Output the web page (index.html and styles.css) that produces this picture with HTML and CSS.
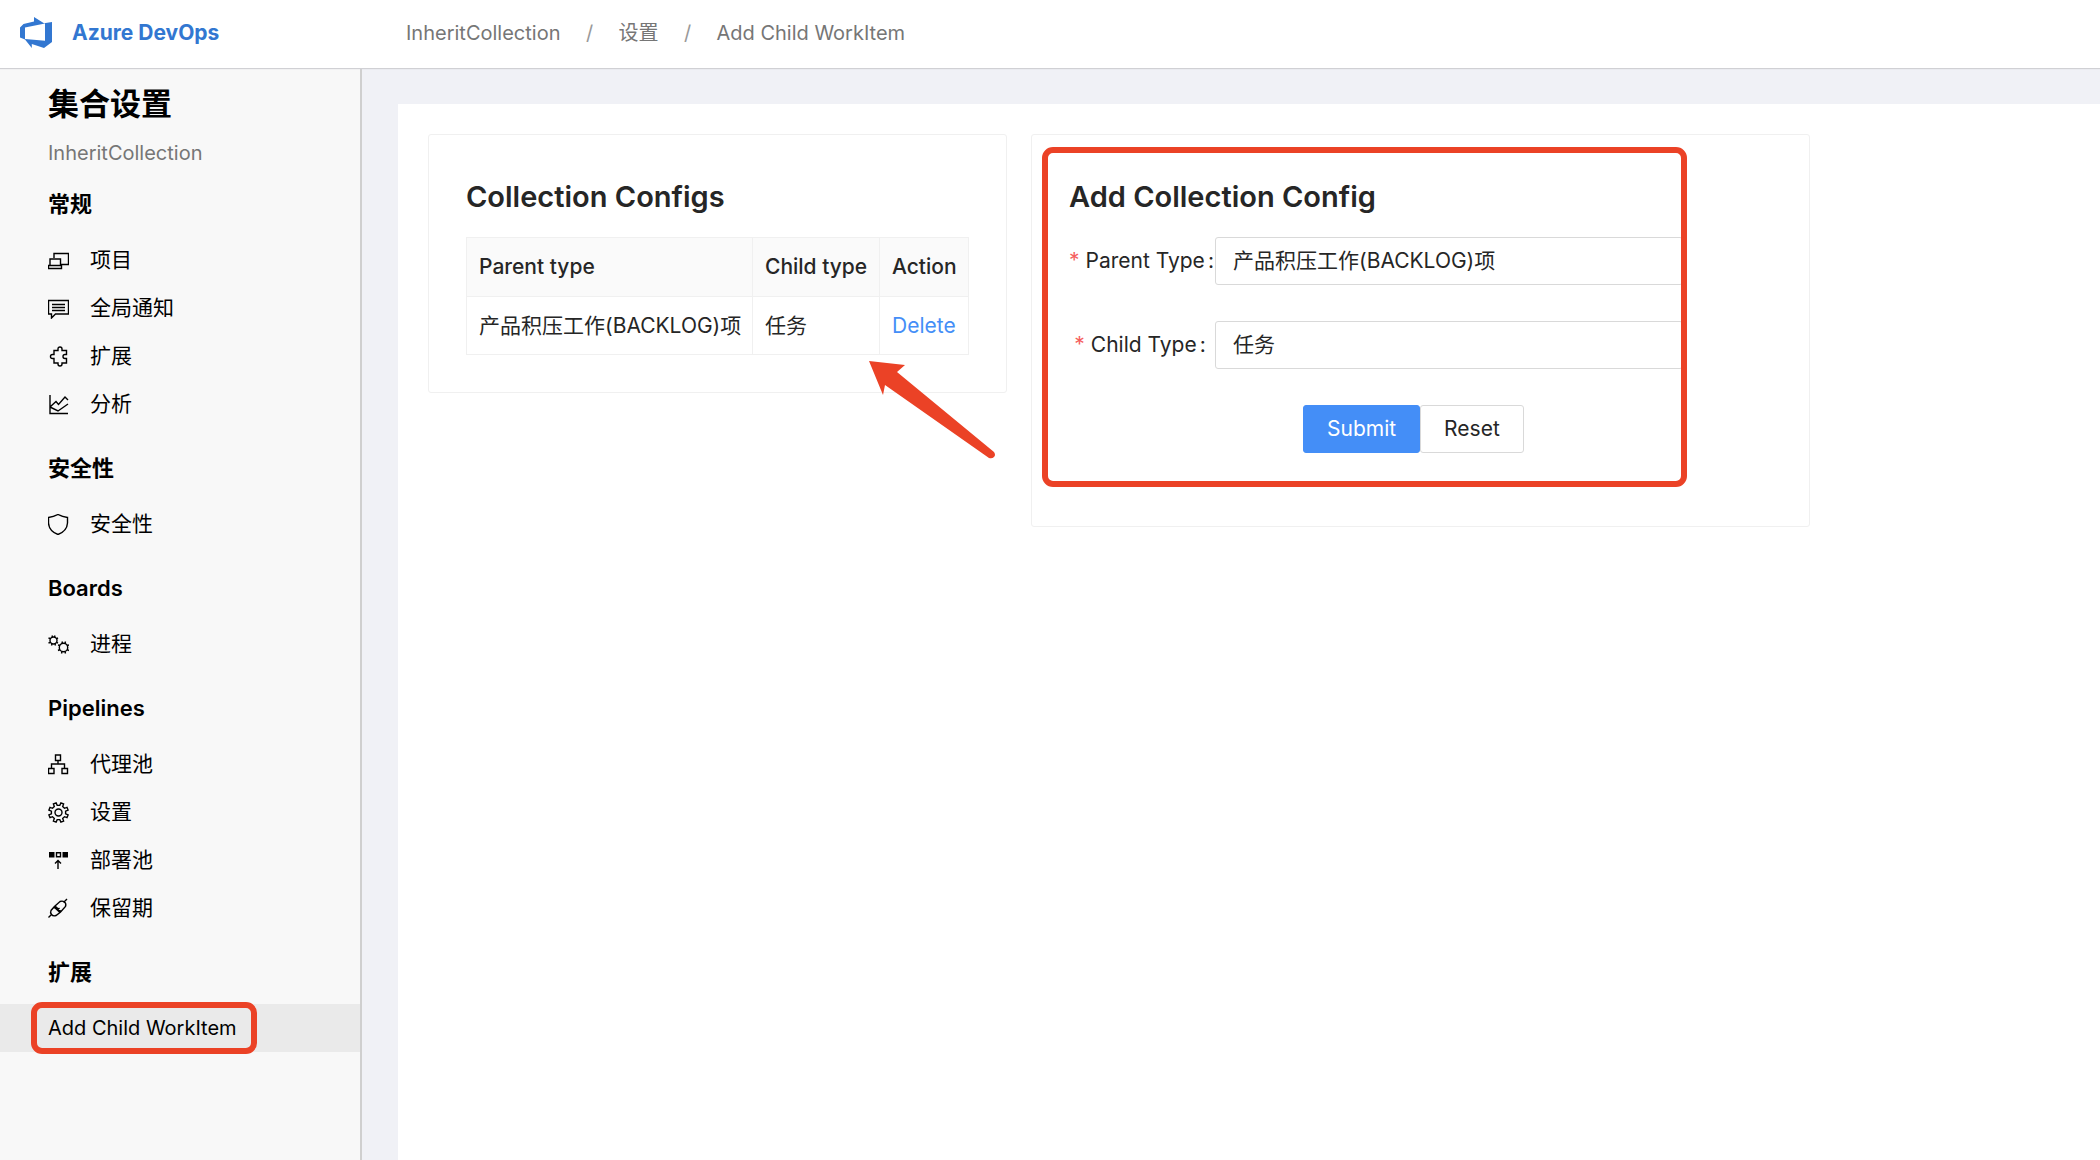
FILE: index.html
```html
<!DOCTYPE html>
<html lang="zh-CN">
<head>
<meta charset="utf-8">
<meta name="viewport" content="width=device-width, initial-scale=1">
<title>Add Child WorkItem - Azure DevOps</title>
<link rel="stylesheet" href="styles.css">
</head>
<body>
<header class="topbar">
  <a class="brand" href="#">
    <svg class="brand-logo" viewBox="0 0 32 32" aria-hidden="true"><path fill="currentColor" fill-rule="evenodd" d="M14 0 24 6.200 32 5V25L24 31 11.800 27V31L5 22.500 0 20.500V10.500L3.500 7 14 4.500ZM5 10.500V22L25 23.800V6.500Z"/></svg>
    <span>Azure DevOps</span>
  </a>
  <nav class="crumbs" aria-label="Breadcrumb">
    <a href="#">InheritCollection</a><span class="crumb-sep">/</span><a href="#">设置</a><span class="crumb-sep">/</span><a href="#">Add Child WorkItem</a>
  </nav>
</header>
<div class="layout">
  <aside class="sidebar">
    <h1 class="side-title">集合设置</h1>
    <p class="side-sub">InheritCollection</p>
    <nav class="menu">
      <h2 class="menu-head">常规</h2>
      <a class="menu-item cjk" href="#"><svg class="icon" viewBox="0 0 21 21"><path d="M6 8V3.500H20.500V14.500H13M2 15V9H12.500V15M.500 15.500H13.500V18.500H.500Z"/></svg>项目</a>
      <a class="menu-item cjk" href="#"><svg class="icon" viewBox="0 0 21 21"><path d="M.500 2.500H20.500V16H7.500L3.500 20V16H.500ZM4 6.500H17M4 9.500H17M4 12.500H17"/></svg>全局通知</a>
      <a class="menu-item cjk" href="#"><svg class="icon" viewBox="0 0 21 21"><path d="M6 4.500H10V3Q10 1 12 1T14 3V4.500H18.500V8.500H17Q15 8.500 15 10.500T17 12.500H18.500V17H14V18Q14 20 12 20T10 18V17H6V12.500H4.500Q2.500 12.500 2.500 10.500T4.500 8.500H6Z"/></svg>扩展</a>
      <a class="menu-item cjk" href="#"><svg class="icon" viewBox="0 0 21 21"><path d="M2 1V19.500H20M2 13 8 7.500 10.500 10.500 17 3 20 6M2 13 10 17 20 10"/></svg>分析</a>
      <h2 class="menu-head">安全性</h2>
      <a class="menu-item cjk" href="#"><svg class="icon" viewBox="0 0 21 21"><path d="M10 .500Q14.500 3 19.500 3.500V9Q19 17 10 20.500Q1 17 .500 9V3.500Q5.500 3 10 .500Z"/></svg>安全性</a>
      <h2 class="menu-head">Boards</h2>
      <a class="menu-item cjk" href="#"><svg class="icon" viewBox="0 0 21 21"><circle cx="5.500" cy="6.500" r="3.500"/><circle cx="15.500" cy="13.500" r="4.200"/><path d="M4 1.500 4.500 3M7 1.500 6.500 3M9 4.500 10 4M9 8.500 10 9M7 10 7.500 11.500M4 10 3.500 11.500M.500 9 2 8.500M.500 4 2 4.500M14 7.500 14.500 9.500M17.500 7.500 17 9.500M19 11.500 21 11M19 15.500 21 16.500M17 17.500 17.500 19.500M14 17.500 13.500 19.500M10 16.500 12 15.500M10 11 12 11.500"/></svg>进程</a>
      <h2 class="menu-head">Pipelines</h2>
      <a class="menu-item cjk" href="#"><svg class="icon" viewBox="0 0 21 21"><path d="M7.500 1H12.500V6.500H7.500ZM10 6.500V10M3.500 14V10H16.500V14M.500 14.500H6V19.500H.500ZM14 14.500H19.500V19.500H14Z"/></svg>代理池</a>
      <a class="menu-item cjk" href="#"><svg class="icon" viewBox="0 0 21 21"><circle cx="10.500" cy="10.500" r="3.500"/><path d="M8.100 .900 9.200 3.400H11.800L12.900 .900 15.600 2 14.700 4.500 16.500 6.300 19 5.400 20.100 8.100 17.600 9.200V11.800L20.100 12.900 19 15.600 16.500 14.700 14.700 16.500 15.600 19 12.900 20.100 11.800 17.600H9.200L8.100 20.100 5.400 19 6.300 16.500 4.500 14.700 2 15.600 .900 12.900 3.400 11.800V9.200L.900 8.100 2 5.400 4.500 6.300 6.300 4.500 5.400 2Z"/></svg>设置</a>
      <a class="menu-item cjk" href="#"><svg class="icon" viewBox="0 0 21 21"><path fill="currentColor" stroke="none" d="M1 2H6.500V7.500H1ZM14.500 2H20V7.500H14.500Z"/><path d="M8.500 2.700H12.500V6.800H8.500ZM10 19V11M7 13.500 10 10.500 13 13.500"/></svg>部署池</a>
      <a class="menu-item cjk" href="#"><svg class="icon" viewBox="0 0 21 21"><path d="M.500 19.500 4 16M19 1 15.500 4.500M7 8 12 3.500Q14.500 2.500 16.500 4T17.500 8.500L13 13.500ZM6 9 12 14.500 8 17.500Q5 18.500 3.500 16.500T3 12.500ZM9 12.500 11.500 10"/></svg>保留期</a>
      <h2 class="menu-head">扩展</h2>
      <a class="menu-item is-active" href="#" aria-current="page"><span class="marked">Add Child WorkItem</span></a>
    </nav>
  </aside>
  <main class="main">
    <div class="page">
      <section class="card card-table">
        <h2 class="card-title">Collection Configs</h2>
        <table class="configs">
          <thead><tr><th class="col-parent">Parent type</th><th class="col-child">Child type</th><th>Action</th></tr></thead>
          <tbody><tr><td>产品积压工作(BACKLOG)项</td><td>任务</td><td><a class="link" href="#">Delete</a></td></tr></tbody>
        </table>
        <svg class="arrow" viewBox="0 0 128 100" aria-hidden="true"><path fill="#eb4226" d="M1 1 37 5 29 12 126 92Q128 95 126 97T121 98L17 25 15 35Z"/></svg>
      </section>
      <section class="card card-form">
        <form class="form">
          <h2 class="card-title">Add Collection Config</h2>
          <div class="field">
            <label for="parent"><span class="star">*</span>Parent Type<span class="colon">:</span></label>
            <select id="parent"><option>产品积压工作(BACKLOG)项</option></select>
          </div>
          <div class="field">
            <label for="child"><span class="star">*</span>Child Type<span class="colon">:</span></label>
            <select id="child"><option>任务</option></select>
          </div>
          <div class="actions"><button class="btn btn-primary" type="submit">Submit</button><button class="btn" type="reset">Reset</button></div>
        </form>
      </section>
    </div>
  </main>
</div>
</body>
</html>
```
FILE: styles.css
```css
* { box-sizing: border-box; }
body {
  margin: 0;
  min-height: 100vh;
  display: flex;
  flex-direction: column;
  font: 20px/32px Inter, "Noto Sans CJK SC", sans-serif;
  color: #262626;
  background: #f0f1f6;
}
h1, h2, p { margin: 0; }
a { color: inherit; text-decoration: none; }
.cjk { font-size: 21px; }

.topbar {
  position: relative;
  display: flex;
  align-items: center;
  height: 68px;
  padding: 0 20px 2px;
  background: #fff;
  box-shadow: 0 1px 1px #d0d0d4;
}
.brand {
  display: flex;
  align-items: center;
  gap: 20px;
  width: 386px;
  color: #3277d1;
  font-size: 21px;
  font-weight: 700;
}
.brand-logo { width: 32px; height: 32px; }
.crumbs { display: flex; color: #767676; }
.crumb-sep { width: 58px; text-align: center; color: #999; }

.layout { flex: 1; display: flex; }
.sidebar {
  flex: none;
  width: 362px;
  padding-top: 16px;
  background: #f8f8f8;
  border-right: 2px solid #cfcfcf;
  color: #000;
}
.side-title, .side-sub { padding-left: 48px; }
.side-title { font-size: 31px; line-height: 40px; font-weight: 700; }
.side-sub { margin-top: 18px; line-height: 22px; color: #767676; }
.menu-head {
  height: 72px;
  padding: 8px 48px 0;
  font-size: 22px;
  line-height: 64px;
  font-weight: 600;
}
.menu-head:lang(zh) { font-weight: 600; }
.menu-item {
  display: flex;
  align-items: center;
  gap: 21px;
  height: 48px;
  padding-left: 48px;
}
.icon {
  width: 21px;
  height: 21px;
  fill: none;
  stroke: currentColor;
  stroke-width: 1.4;
}
.is-active { background: #eaeaea; }
.marked { position: relative; }
.marked::after, .form::after {
  content: "";
  position: absolute;
  border: 6px solid #eb4226;
  border-radius: 11px;
  pointer-events: none;
}
.marked::after { inset: -10px -20px -10px -17px; }

.main { flex: 1; padding: 36px 0 0 36px; }
.page {
  display: flex;
  align-items: flex-start;
  gap: 24px;
  min-height: 100%;
  padding: 30px;
  background: #fff;
}
.card {
  position: relative;
  padding: 37px;
  border: 1px solid #f0f0f0;
  border-radius: 3px;
  font-size: 21px;
}
.card-table { width: 579px; }
.card-form { width: 779px; padding-bottom: 73px; }
.card-title {
  margin-bottom: 15px;
  font-size: 29px;
  line-height: 50px;
  font-weight: 600;
}
.configs {
  width: 100%;
  table-layout: fixed;
  border-collapse: collapse;
}
.configs th, .configs td {
  height: 58px;
  padding: 0 12px;
  border: 1px solid #f0f0f0;
  text-align: left;
  white-space: nowrap;
}
.configs th { height: 59px; background: #fafafa; font-weight: 500; }
.configs .col-parent { width: 286px; }
.configs .col-child { width: 127px; }
.link { color: #448ef7; }
.arrow {
  position: absolute;
  left: 439px;
  top: 225px;
  width: 128px;
  height: 100px;
}

.form { position: relative; width: 614px; }
.form::after { inset: -25px -4px -34px -27px; }
.field { display: flex; margin-bottom: 36px; }
.field label {
  flex: none;
  width: 146px;
  padding-right: 4px;
  line-height: 48px;
  text-align: center;
  white-space: nowrap;
}
.star { margin-right: 6px; color: #f5605e; }
.colon { margin-left: 3px; }
.field select {
  flex: 1;
  height: 48px;
  padding: 0 17px;
  border: 1px solid #d9d9d9;
  border-radius: 3px;
  background: #fff;
  appearance: none;
  font: inherit;
  color: inherit;
}
.actions { display: flex; padding-left: 234px; }
.btn {
  height: 48px;
  padding: 0 23px;
  border: 1px solid #d9d9d9;
  border-radius: 3px;
  background: #fff;
  font: inherit;
  color: inherit;
}
.btn-primary { border-color: #448ef7; background: #448ef7; color: #fff; }
```
